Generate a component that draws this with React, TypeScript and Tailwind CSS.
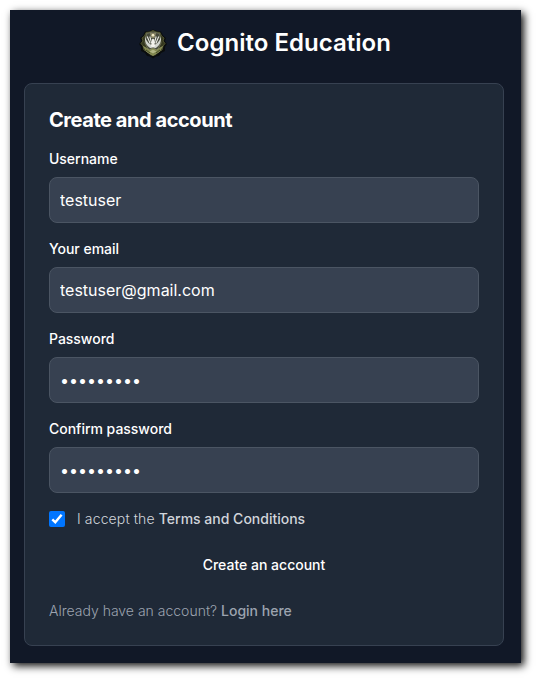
function Crest() {
  return (
    <svg className="mr-2 h-8 w-8" viewBox="0 0 32 32" aria-hidden="true">
      <path d="M16 2.500l4 1.500 4 .5 2 4 3 2.500-1 3 2 3-2 3v4l-4 2-2 3-3 .5-3 2-3-2-3-.5-2-3-4-2v-4l-2-3 2-3-1-3 3-2.500 2-4 4-.5z" fill="#0a0c0d" />
      <path d="M16 3.500l3 1.500 4 .5 1.500 3.500 2.500 2-1 3 2 2.500-2 2.500-1 4-4 2-2 2.500-3 1-3-1-2-2.500-4-2-1-4-2-2.500 2-2.500-1-3 2.500-2 1.500-3.500 4-.5z" fill="#34371f" stroke="#5c6036" strokeWidth=".8" />
      <path d="M9.500 6.500L16 5l6.500 1.500L24 16l-3 6-5 3-5-3-3-6z" fill="#45483a" stroke="#84856a" strokeWidth=".7" />
      <path d="M13 6h6l-1 5h-4z" fill="#85846a" />
      <path d="M8 9c-.5 6 1.500 10.500 6.500 12.500l1-3C12 17 9 14 8 9zm16 0c.5 6-1.500 10.500-6.500 12.500l-1-3C20 17 23 14 24 9z" fill="#d3d6d0" />
      <path d="M10.200 9.500l3 7m-.4-7l2 7m7-7l-3 7m.4-7l-2 7" stroke="#e9eae5" strokeWidth="1.100" />
      <path d="M15 12.500l1-1 1.300 1.200-.3 3 1.300 3L16 21l-2.300-2.300 1.300-3z" fill="#f2f2ec" />
      <circle cx="16" cy="8.200" r="1.800" fill="#f0ebc8" stroke="#77714c" strokeWidth=".6" />
      <path d="M6.500 19.500l6 3.500 3.500-1.500 3.500 1.500 6-3.500-3.500 5.500-6 3.500-6-3.500z" fill="#7d834c" stroke="#a3a76b" strokeWidth=".6" />
      <path d="M12.500 24.500l3.500-2 3.500 2-3.500 2z" fill="#b2b584" />
      <path d="M9 23l4 3m10-3l-4 3" stroke="#353a20" strokeWidth=".8" />
    </svg>
  );
}

const fields = [
  { id: "username", label: "Username", type: "text", value: "testuser" },
  { id: "email", label: "Your email", type: "email", value: "testuser@gmail.com" },
  { id: "password", label: "Password", type: "password", value: "password1" },
  { id: "confirm", label: "Confirm password", type: "password", value: "password1" },
];

export default function App() {
  return (
    <div className="h-[681px] w-[539px] overflow-hidden bg-white pt-[10px] pl-[10px] font-['Inter',sans-serif]">
      <main className="flex h-[653px] w-[511px] flex-col bg-[#111827] pt-[17px] pl-[14px] shadow-[3px_3px_8px_rgba(0,0,0,0.95)]">
        <a className="mb-6 flex w-[480px] items-center justify-center text-2xl font-semibold tracking-[0.02px] text-white">
          <Crest />
          Cognito Education
        </a>
        <section className="w-[480px] rounded-lg border border-[#374151] bg-[#1f2937] p-6">
          <form className="space-y-4" onSubmit={(e) => e.preventDefault()}>
            <h1 className="text-xl leading-[25px] font-bold tracking-[-0.44px] text-white">Create and account</h1>
            {fields.map((f) => (
              <div key={f.id}>
                <label htmlFor={f.id} className="mb-2 block text-sm font-medium tracking-[-0.02px] text-white">
                  {f.label}
                </label>
                <input
                  id={f.id}
                  type={f.type}
                  defaultValue={f.value}
                  className="block h-[46px] w-full rounded-lg border border-[#4b5563] bg-[#374151] p-2.5 text-base text-white outline-none"
                />
              </div>
            ))}
            <div className="flex h-5 items-center text-sm">
              <span className="flex h-4 w-4 items-center justify-center rounded-[2px] bg-[#0075ff]" role="checkbox" aria-checked="true">
                <svg className="h-4 w-4" viewBox="0 0 16 16" fill="none">
                  <path d="M3.300 8.300l3 3 6.300-7.600" stroke="white" strokeWidth="2.400" />
                </svg>
              </span>
              <label className="ml-3 font-light tracking-[0.13px] text-[#d1d5db]">
                I accept the <a className="font-medium tracking-normal">Terms and Conditions</a>
              </label>
            </div>
            <button className="block h-10 w-full text-center text-sm font-medium text-white">Create an account</button>
            <p className="text-sm font-light text-[#9ca3af]">
              Already have an account? <a className="font-medium">Login here</a>
            </p>
          </form>
        </section>
      </main>
    </div>
  );
}
